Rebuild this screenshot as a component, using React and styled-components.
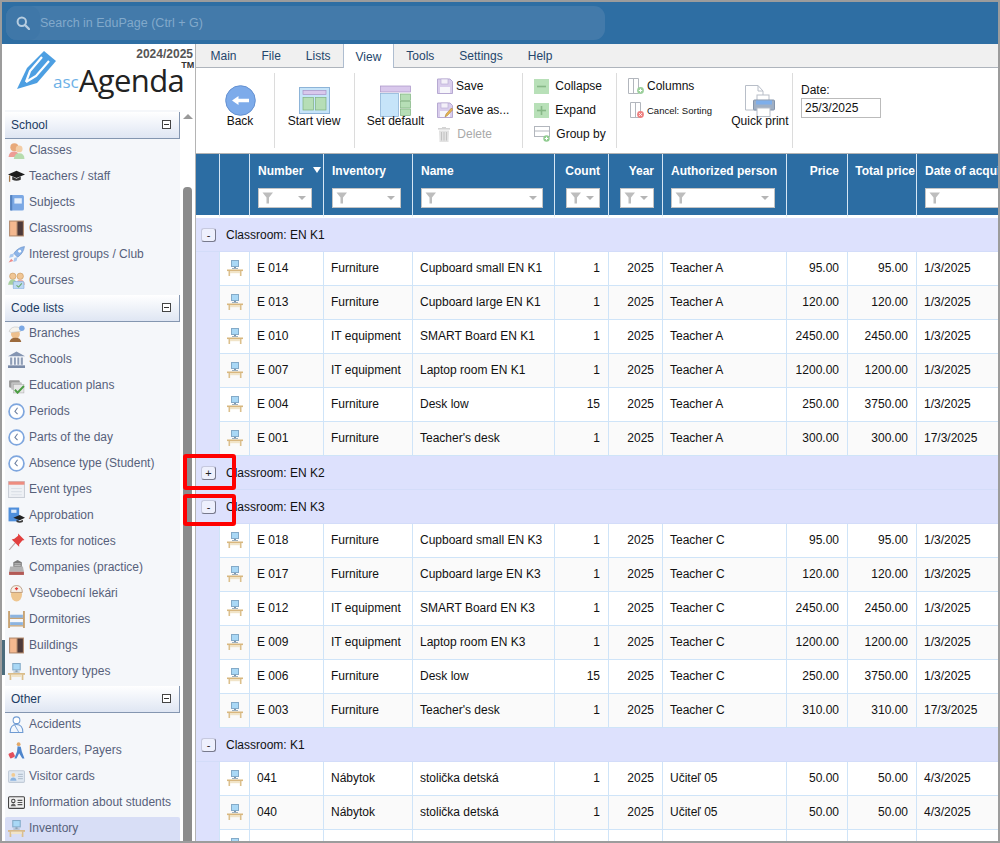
import React from 'react';
import styled, { createGlobalStyle } from 'styled-components';

const GlobalStyle = createGlobalStyle`
	html, body {
		margin: 0;
		padding: 0;
		background: #fff;
	}
	body {
		font-family: "Liberation Sans", Arial, sans-serif;
		font-size: 12px;
		color: #111;
	}
	* {
		box-sizing: border-box;
	}
`;

const Page = styled.div`
	position: relative;
	width: 1000px;
	height: 843px;
	border: 2px solid #9c9c9c;
	display: flex;
	flex-direction: column;
	overflow: hidden;
	background: #fff;
`;

const TopBar = styled.header`
	flex: none;
	height: 42px;
	padding: 4px;
	background: #2e6ea3;
`;

const SearchBox = styled.div`
	width: 599px;
	height: 34px;
	border-radius: 11px;
	background: #437aaa;
	display: flex;
	align-items: center;
	color: #82a9ca;
	font-size: 12.5px;
`;

const SearchButton = styled.div`
	width: 34px;
	height: 34px;
	border-radius: 11px;
	background: #3f77a8;
	display: flex;
	align-items: center;
	justify-content: center;
`;

const Body = styled.div`
	flex: 1;
	min-height: 0;
	display: flex;
`;

/* sidebar */

const Sidebar = styled.aside`
	flex: none;
	width: 193px;
	padding-left: 3px;
	display: flex;
	flex-direction: column;
	background: #fff;
`;

const LogoArea = styled.div`
	flex: none;
	height: 66px;
	padding-right: 2px;
	display: flex;
	flex-direction: column;
`;

const SchoolYear = styled.div`
	align-self: flex-end;
	font-weight: bold;
	color: #555;
	line-height: 14px;
	margin-top: 3px;
`;

const LogoRow = styled.div`
	display: flex;
	align-items: flex-start;
	margin-top: -10px;
	padding-left: 12px;
`;

const LogoAsc = styled.span`
	font-family: "Open Sans", sans-serif;
	font-size: 17px;
	line-height: 20px;
	color: #6db1e6;
	margin: 21px 0 0 -4px;
`;

const LogoName = styled.span`
	font-family: "Open Sans", sans-serif;
	font-size: 31px;
	line-height: 42px;
	color: #222;
	letter-spacing: -0.6px;
	margin-top: 8px;
`;

const LogoMark = styled.span`
	font-size: 9px;
	font-weight: bold;
	color: #333;
	line-height: 10px;
	margin: 9px 0 0 -3px;
`;

const SideScroll = styled.div`
	flex: 1;
	min-height: 0;
	display: flex;
	overflow: hidden;
`;

const MenuColumn = styled.nav`
	flex: none;
	width: 175px;
	padding-top: 2px;
	background: #f5f7fa;
`;

const SectionHead = styled.div`
	height: 27px;
	padding: 0 8px 1px 6px;
	display: flex;
	align-items: center;
	justify-content: space-between;
	color: #1b3b63;
	background: linear-gradient(#fff, #dfe6f3);
	border-right: 1px solid #8496b0;
	border-bottom: 1px solid #8496b0;
`;

const CollapseBox = styled.span`
	width: 9px;
	height: 9px;
	border: 1px solid #444;
	background: #fff;
	display: flex;
	align-items: center;
	justify-content: center;

	&::before {
		content: '';
		width: 5px;
		height: 1px;
		background: #333;
	}
`;

const MenuItem = styled.div`
	height: 26px;
	padding: 0 0 4px 3px;
	display: flex;
	align-items: center;
	gap: 4px;
	color: #57617a;
	border-radius: 2px;
	background: ${(p) => (p.$active ? '#d8def6' : 'transparent')};
`;

const ScrollTrack = styled.div`
	flex: none;
	width: 15px;
	padding: 4px 3px 0 3px;
	display: flex;
	flex-direction: column;
	align-items: center;
`;

const ScrollArrow = styled.div`
	width: 0;
	height: 0;
	border-left: 5px solid transparent;
	border-right: 5px solid transparent;
	border-bottom: 5px solid #9a9a9a;
`;

const ScrollThumb = styled.div`
	width: 9px;
	height: 700px;
	margin-top: 68px;
	border-radius: 4px 4px 0 0;
	background: #8c8c8c;
`;

const EdgeMark = styled.div`
	position: absolute;
	left: 0;
	top: 638px;
	width: 3px;
	height: 35px;
	background: #4b6c7c;
`;

/* main area */

const Main = styled.main`
	flex: 1;
	min-width: 0;
	display: flex;
	flex-direction: column;
	border-left: 1px solid #b4b4b4;
`;

const TabBar = styled.div`
	flex: none;
	height: 24px;
	padding-left: 2px;
	display: flex;
	background: #f0f0f0;
	border-bottom: 1px solid #aeb4bc;
`;

const Tab = styled.div`
	height: ${(p) => (p.$active ? '24px' : '23px')};
	padding: 1px 11.5px 0;
	display: flex;
	align-items: center;
	color: #24466c;
	background: ${(p) => (p.$active ? '#fff' : 'transparent')};
	border-left: 1px solid ${(p) => (p.$active ? '#aebdd0' : 'transparent')};
	border-right: 1px solid ${(p) => (p.$active ? '#aebdd0' : 'transparent')};
`;

const Ribbon = styled.div`
	flex: none;
	height: 86px;
	padding-top: 5px;
	display: flex;
	background: #fff;
	border-bottom: 1px solid #b4b4b4;
`;

const RibbonGroup = styled.div`
	flex: none;
	width: ${(p) => p.$width}px;
	height: 75px;
	padding-left: ${(p) => p.$pad || 0}px;
	display: flex;
	border-right: ${(p) => (p.$last ? '0' : '1px solid #dcdcdc')};
`;

const BigButton = styled.div`
	flex: none;
	width: ${(p) => p.$width}px;
	height: 75px;
	padding-bottom: 20px;
	position: relative;
	display: flex;
	align-items: center;
	justify-content: center;
`;

const BigLabel = styled.span`
	position: absolute;
	left: -10px;
	right: -10px;
	top: 41px;
	text-align: center;
	white-space: nowrap;
`;

const SmallColumn = styled.div`
	flex: none;
	display: flex;
	flex-direction: column;
	padding-top: 3px;
	gap: 4px;
	margin-left: ${(p) => p.$offset || 0}px;
`;

const SmallButton = styled.div`
	height: 20px;
	display: flex;
	align-items: center;
	gap: 3px;
	white-space: nowrap;
	color: ${(p) => (p.$disabled ? '#a9a9a9' : '#111')};
	font-size: ${(p) => p.$size || 12}px;
`;

const DateBlock = styled.div`
	padding-top: 10px;
	display: flex;
	flex-direction: column;
	gap: 1px;
`;

const DateInput = styled.div`
	width: 80px;
	height: 20px;
	padding-left: 3px;
	display: flex;
	align-items: center;
	border: 1px solid #bbb;
`;

/* table */

const TableWrap = styled.div`
	flex: 1;
	min-height: 0;
	overflow: hidden;
	background: #fff;
`;

const Table = styled.table`
	table-layout: fixed;
	width: 841px;
	border-collapse: separate;
	border-spacing: 0;
`;

const HeadCell = styled.th`
	height: 64px;
	padding: 10px ${(p) => (p.$tight ? 1 : 8)}px 0 8px;
	vertical-align: top;
	background: #2c6da3;
	color: #fff;
	font-size: 12px;
	font-weight: bold;
	line-height: 14px;
	white-space: nowrap;
	text-align: ${(p) => (p.$right ? 'right' : 'left')};
	border-right: 1px solid #d5e6f5;
	border-bottom: 3px solid #fff;
`;

const HeadLabel = styled.div`
	display: flex;
	justify-content: space-between;
	margin-right: ${(p) => (p.$sorted ? '-6px' : '0')};
`;

const SortArrow = styled.span`
	width: 0;
	height: 0;
	margin-top: 3px;
	border-left: 4px solid transparent;
	border-right: 4px solid transparent;
	border-top: 6px solid #fff;
`;

const FilterBox = styled.div`
	width: ${(p) => p.$width}px;
	height: 20px;
	margin-top: 10px;
	margin-left: ${(p) => (p.$right ? 'auto' : '0')};
	padding: 0 5px 0 3px;
	display: flex;
	align-items: center;
	justify-content: space-between;
	background: #fff;
	border: 1px solid #c4c4c4;
`;

const FilterCaret = styled.span`
	width: 0;
	height: 0;
	border-left: 4px solid transparent;
	border-right: 4px solid transparent;
	border-top: 4px solid #b5b5b5;
`;

const GroupCell = styled.td`
	height: 34px;
	padding: 0 0 0 5px;
	background: #dde1fd;
	border-bottom: 1px solid #d3dcf9;
	color: #111;
`;

const GroupLine = styled.div`
	display: flex;
	align-items: center;
	gap: 10px;
`;

const Toggle = styled.span`
	flex: none;
	width: 15px;
	height: 14px;
	display: flex;
	align-items: center;
	justify-content: center;
	background: #eef0fd;
	border: 1px solid #c6c9de;
	border-right-color: #77798c;
	border-bottom-color: #77798c;
	border-radius: 3px;
	font-size: 11px;
	line-height: 12px;
	color: #222;
`;

const MarginCell = styled.td`
	background: #dde1fd;
	border-right: 1px solid #cfe4f8;
`;

const Cell = styled.td`
	height: 34px;
	padding: 0 8px 1px 7px;
	white-space: nowrap;
	overflow: hidden;
	background: ${(p) => (p.$even ? '#fafafa' : '#fff')};
	border-right: 1px solid #cfe4f8;
	border-bottom: 1px solid #cfe4f8;
	text-align: ${(p) => (p.$right ? 'right' : p.$center ? 'center' : 'left')};
`;

const Glyph = styled.svg`
	flex: none;
	display: block;
`;

const Highlight = styled.div`
	position: absolute;
	left: 181px;
	top: ${(p) => p.$top}px;
	width: 53px;
	height: ${(p) => p.$height}px;
	border: 4px solid #f00;
	border-radius: 3px;
`;

/* drawings */

const DeskArt = () => (
	<>
		<rect x="4.5" y="0.5" width="7" height="6" fill="#a9d8f6" stroke="#84aac8" />
		<rect x="7" y="7" width="2" height="1.5" fill="#7d96ab" />
		<rect x="5" y="8" width="6" height="1" fill="#9db0c0" />
		<rect x="0" y="9.5" width="16" height="1.6" fill="#d8b77f" />
		<rect x="1.5" y="11" width="1.6" height="5" fill="#dcc08d" />
		<rect x="12.9" y="11" width="1.6" height="5" fill="#dcc08d" />
		<rect x="3" y="11" width="10" height="2.2" fill="#f1e4c8" />
	</>
);

const Desk = ({ size = 16 }) => (
	<Glyph width={size} height={size} viewBox="0 0 16 16">
		<DeskArt />
	</Glyph>
);

const clock = (
	<>
		<circle cx="8" cy="8" r="7" fill="#fff" stroke="#7ea6de" strokeWidth="1.6" />
		<path d="M9 4.5 L6.5 8 L9 10.5" fill="none" stroke="#6c7fa0" strokeWidth="1" />
	</>
);

const door = (
	<>
		<rect x="1" y="0.5" width="14" height="15" fill="#b28a6d" />
		<rect x="2" y="1.5" width="6" height="13" fill="#f4b88f" />
		<rect x="9" y="1.5" width="5" height="13" fill="#4d3a3a" />
	</>
);

const menuArt = {
	classes: (
		<>
			<circle cx="6" cy="5" r="3.8" fill="#e8a97a" />
			<path d="M0.5 14 Q1 9 6 9 Q10 9 10 14 Z" fill="#ee9d96" />
			<circle cx="10.5" cy="6.5" r="3.2" fill="#f3cda6" />
			<path d="M5.5 16 Q6 10.5 10.5 10.5 Q15.5 10.5 15.5 16 Z" fill="#b6dcae" />
		</>
	),
	teachers: (
		<>
			<path d="M0 6 L8 2.5 L16 6 L8 9.5 Z" fill="#1d1d1d" />
			<path d="M4 8 L4 11 Q8 13 12 11 L12 8 L8 10 Z" fill="#333" />
			<path d="M1.5 7 L1.5 13" stroke="#a5794a" strokeWidth="1.2" />
		</>
	),
	subjects: (
		<>
			<rect x="2" y="1" width="13" height="14.5" rx="1.5" fill="#7ba8e4" />
			<rect x="2" y="1" width="2" height="14.5" fill="#5582c0" />
			<rect x="6" y="4" width="7" height="5" fill="#e6f0fc" />
		</>
	),
	classrooms: door,
	interest: (
		<>
			<path d="M15.5 0.5 Q9 1.5 5.5 7 L9 10.5 Q14.5 7 15.5 0.5 Z" fill="#8cb4e8" stroke="#6d93c8" strokeWidth="0.6" />
			<circle cx="11" cy="5" r="1.4" fill="#fff" />
			<path d="M5.5 7 L2 8 L1 11 L5 10 Z M9 10.5 L8 14 L5 15 L6 11 Z" fill="#a9c8ef" />
			<path d="M3 12 L0.5 15.5 L5 14 Z" fill="#ee8b88" />
		</>
	),
	courses: (
		<>
			<circle cx="4.5" cy="4" r="3" fill="#f0c695" stroke="#c99a62" strokeWidth="0.6" />
			<circle cx="11.5" cy="4" r="3" fill="#f0c695" stroke="#c99a62" strokeWidth="0.6" />
			<path d="M0 12 Q1 7 4.5 7 Q8 7 8 12 Z" fill="#a8cf9f" />
			<path d="M8 12 Q8 7 11.5 7 Q15 7 16 12 Z" fill="#ecb0a4" />
			<rect x="5" y="9" width="10" height="7" rx="1" fill="#bcd8f2" stroke="#7ea6de" strokeWidth="0.6" />
			<path d="M8 12.5 L10 14.2 L13 10.8" fill="none" stroke="#6aa96a" />
		</>
	),
	branches: (
		<>
			<circle cx="7" cy="8.5" r="4.2" fill="#eec08d" />
			<path d="M1 6 Q3 1 9 2 Q13 3 12 6 L3 7 Z" fill="#f6f4ee" stroke="#bbb" strokeWidth="0.5" />
			<circle cx="13" cy="3" r="2.6" fill="#7ba8e4" />
			<path d="M1.5 16 Q2 12 7 12 Q12 12 12.5 16 Z" fill="#9b6a3c" />
		</>
	),
	schools: (
		<>
			<path d="M8 0.5 L16 5 L0 5 Z" fill="#8495b2" />
			<path d="M2 6 h2 v7 h-2 Z M5.6 6 h1.8 v7 h-1.8 Z M8.8 6 h1.8 v7 h-1.8 Z M12 6 h2 v7 h-2 Z" fill="#8e9db6" />
			<rect x="0" y="13.5" width="16" height="2.5" fill="#7a8ba8" />
		</>
	),
	plans: (
		<>
			<rect x="1" y="3" width="10" height="7" rx="1" fill="#9a9a9a" />
			<rect x="3" y="5" width="10" height="7" rx="1" fill="#c2c2c2" />
			<rect x="5" y="7" width="10" height="8" fill="#e7e7e7" stroke="#aaa" strokeWidth="0.5" />
			<path d="M6.5 12 L9 14.8 L15 8.5" fill="none" stroke="#4b9d43" strokeWidth="1.8" />
		</>
	),
	clock,
	event: (
		<>
			<rect x="0.5" y="0.5" width="15" height="15" fill="#eef1f5" stroke="#c9ced6" />
			<rect x="0.5" y="0.5" width="15" height="3" fill="#ee8d80" />
			<path d="M3 7 h10 M3 10 h10 M3 13 h10" stroke="#dbe0e7" strokeWidth="1" />
		</>
	),
	approbation: (
		<>
			<rect x="0.5" y="0.5" width="10" height="13" fill="#4f8fdc" />
			<rect x="3" y="2.5" width="5" height="3" fill="#dbe9fa" />
			<path d="M5 10 L11 7.5 L16 10 L11 12.5 Z" fill="#222" />
			<path d="M8 12 L8 14 Q11 15.5 14 14 L14 12 L11 13.5 Z" fill="#3a3a3a" />
		</>
	),
	pin: (
		<>
			<path d="M1 16 L7 9" stroke="#b9a9a9" strokeWidth="1" />
			<path d="M9.5 0.5 L15.5 6.5 L13.5 7 L10.5 10.5 L10.5 13 L3.5 6 L6 5.5 L9.5 2.5 Z" fill="#e2403f" />
		</>
	),
	companies: (
		<>
			<path d="M5 3 L9 1 L13 3 L13 10 L5 10 Z" fill="#7c7c7c" />
			<path d="M2 7 L14 7 L15 12 L1 12 Z" fill="#b3b3b3" />
			<path d="M1 12 h14 v3 h-14 Z" fill="#b35a56" />
			<path d="M6 4.5 h6 M6 6 h6" stroke="#dadada" strokeWidth="0.7" />
		</>
	),
	doctor: (
		<>
			<ellipse cx="8" cy="9" rx="5.2" ry="6.5" fill="#eec690" />
			<path d="M2.5 7 Q2.5 0.5 8 0.5 Q13.5 0.5 13.5 7 Z" fill="#f6f0e8" stroke="#a67a55" strokeWidth="0.6" />
			<path d="M8 2 v3 M6.5 3.5 h3" stroke="#e2403f" strokeWidth="1.2" />
		</>
	),
	dorm: (
		<>
			<path d="M1 0 v16 M15 0 v16" stroke="#c8a373" strokeWidth="1.8" />
			<rect x="2" y="3.5" width="12" height="3" fill="#8cb4e0" />
			<rect x="2" y="10.5" width="12" height="3" fill="#8cb4e0" />
			<path d="M1 7 h14 M1 14 h14" stroke="#c8a373" strokeWidth="1.2" />
		</>
	),
	buildings: door,
	desk: <DeskArt />,
	accidents: (
		<>
			<circle cx="8" cy="4" r="3.2" fill="#fff" stroke="#6f9bd2" />
			<path d="M2 15.5 Q2 8 8 8 Q14 8 14 15.5 Z" fill="#f2f7fd" stroke="#6f9bd2" />
			<path d="M6 8 L10 15" stroke="#6f9bd2" strokeWidth="0.8" />
		</>
	),
	boarders: (
		<>
			<circle cx="10" cy="2" r="1.8" fill="#e2a868" />
			<path d="M9 4 L12 4.5 L13 9 L15.5 15.5 L13.5 15.5 L10.5 10.5 L8 15.5 L6 15.5 L8.5 9 Z" fill="#4f86cc" />
			<rect x="1" y="10" width="5" height="5" rx="1" transform="rotate(-25 3.5 12.5)" fill="#e4505c" />
		</>
	),
	visitor: (
		<>
			<rect x="0.5" y="2.5" width="15" height="11" rx="1" fill="#dfe8f2" stroke="#c2ccd8" />
			<circle cx="5" cy="6.5" r="1.8" fill="#f2cb92" />
			<path d="M2 12 Q2.5 9 5 9 Q7.5 9 8 12 Z" fill="#8cb4e0" />
			<path d="M9.5 6 h4.5 M9.5 8 h4.5 M9.5 10 h4.5" stroke="#b5c2d0" />
		</>
	),
	info: (
		<>
			<rect x="0.5" y="2.5" width="15" height="11" rx="1" fill="#f1f1f1" stroke="#444" />
			<circle cx="5" cy="6.5" r="1.6" fill="none" stroke="#444" />
			<path d="M2.5 11.5 Q3 9 5 9 Q7 9 7.5 11.5 Z" fill="#666" />
			<path d="M9 6 h4.5 M9 8 h4.5 M9 10 h4.5" stroke="#555" />
		</>
	),
};

const MenuIcon = ({ kind }) => (
	<Glyph width="17" height="17" viewBox="0 0 16 16">
		{menuArt[kind]}
	</Glyph>
);

const LogoPencil = () => (
	<Glyph width="40" height="40" viewBox="0 0 40 40">
		<polygon points="27,0 39,10 20,32 0,38 10,17" fill="#4d9fe2" />
		<path d="M25 6 L13 20 L9 31" fill="none" stroke="#fff" strokeWidth="2.2" />
		<path d="M32 10 L19 25 L9 31" fill="none" stroke="#fff" strokeWidth="2.2" />
	</Glyph>
);

const SearchIcon = () => (
	<Glyph width="14" height="14" viewBox="0 0 14 14">
		<circle cx="5.8" cy="5.8" r="4.2" fill="none" stroke="#b7cde0" strokeWidth="2" />
		<path d="M9 9 L13 13" stroke="#b7cde0" strokeWidth="2.4" strokeLinecap="round" />
	</Glyph>
);

const BackIcon = () => (
	<Glyph width="31" height="31" viewBox="0 0 31 31">
		<circle cx="15.5" cy="15.5" r="14.8" fill="#7dabea" stroke="#6490d0" />
		<path d="M7 15.5 L13.5 11 L13.5 13.8 L24 13.8 L24 17.2 L13.5 17.2 L13.5 20 Z" fill="#fff" />
	</Glyph>
);

const StartViewIcon = () => (
	<Glyph width="31" height="27" viewBox="0 0 31 27">
		<rect x="0.5" y="0.5" width="30" height="26" fill="#c6e4f9" stroke="#8db4d8" />
		<rect x="4" y="3.5" width="23" height="4" fill="#d9c8ec" stroke="#a792c6" strokeWidth="0.7" />
		<rect x="4" y="10.5" width="10.5" height="12.5" fill="#b6deb6" stroke="#7fb27f" strokeWidth="0.7" />
		<rect x="16.5" y="10.5" width="10.5" height="12.5" fill="#b6deb6" stroke="#7fb27f" strokeWidth="0.7" />
	</Glyph>
);

const SetDefaultIcon = () => (
	<Glyph width="31" height="32" viewBox="0 0 31 32">
		<rect x="0.5" y="1" width="30" height="6" fill="#d9c8ec" stroke="#a792c6" strokeWidth="0.7" />
		<rect x="0.5" y="8.5" width="18" height="23" fill="#c6e4f9" stroke="#8db4d8" strokeWidth="0.8" />
		<rect x="20.5" y="9" width="10" height="6.5" fill="#b6deb6" stroke="#7fb27f" strokeWidth="0.7" />
		<rect x="20.5" y="16.5" width="10" height="6.5" fill="#b6deb6" stroke="#7fb27f" strokeWidth="0.7" />
		<rect x="20.5" y="24" width="10" height="6.5" fill="#b6deb6" stroke="#7fb27f" strokeWidth="0.7" />
	</Glyph>
);

const Floppy = ({ edit }) => (
	<Glyph width="16" height="16" viewBox="0 0 16 16">
		<path d="M0.5 1 H13 L15.5 3.5 V15.5 H0.5 Z" fill="#d9cdec" stroke="#b6a9d2" />
		<rect x="4" y="1" width="7" height="5" fill="#f3f0f8" stroke="#b6a9d2" strokeWidth="0.6" />
		<rect x="3" y="9" width="10" height="6" fill="#f7f7fb" />
		{edit && <path d="M8 15 L9 12 L14.5 6 L16 7.5 L10.5 13.5 Z" fill="#e9b44f" stroke="#9a7a38" strokeWidth="0.5" />}
	</Glyph>
);

const TrashIcon = () => (
	<Glyph width="14" height="15" viewBox="0 0 14 15">
		<rect x="1" y="1" width="12" height="1.6" fill="#d4d4d4" />
		<rect x="5" y="0" width="4" height="1.5" fill="#d4d4d4" />
		<path d="M2 3.5 H12 L11.5 15 H2.5 Z" fill="#e2e2e2" />
		<path d="M4.5 5 V13.5 M7 5 V13.5 M9.5 5 V13.5" stroke="#c2c2c2" />
	</Glyph>
);

const FoldIcon = ({ plus }) => (
	<Glyph width="15" height="15" viewBox="0 0 15 15">
		<rect width="15" height="15" fill="#b8e0b8" />
		<path d="M3 7.5 H12" stroke="#88b888" strokeWidth="1.6" />
		{plus && <path d="M7.5 3 V12" stroke="#88b888" strokeWidth="1.6" />}
	</Glyph>
);

const GroupIcon = () => (
	<Glyph width="16" height="16" viewBox="0 0 16 16">
		<rect x="0.5" y="0.5" width="15" height="10" fill="#fff" stroke="#b2b6bd" />
		<path d="M0.5 5 H15.5" stroke="#b2b6bd" />
		<circle cx="12.5" cy="12.5" r="3.2" fill="#8fcb8f" />
		<path d="M10.8 12.5 H14.2 M12.5 10.8 V14.2" stroke="#fff" />
	</Glyph>
);

const ColumnsIcon = ({ cancel }) => (
	<Glyph width="16" height="16" viewBox="0 0 16 16">
		{cancel ? (
			<path d="M2.5 0.5 H12.5 V15.5 H2.5 Z M7.5 0.5 V15.5" fill="#fff" stroke="#b2b6bd" />
		) : (
			<path d="M0.5 0.5 H10.5 V15.5 H0.5 Z M5.5 0.5 V15.5" fill="#fff" stroke="#b2b6bd" />
		)}
		<circle cx="12.5" cy="12.5" r="3.4" fill={cancel ? '#ee8080' : '#9bcf9b'} />
		{cancel ? (
			<path d="M11.2 11.2 L13.8 13.8 M13.8 11.2 L11.2 13.8" stroke="#fff" />
		) : (
			<path d="M10.8 12.5 H14.2 M12.5 10.8 V14.2" stroke="#fff" />
		)}
	</Glyph>
);

const PrintIcon = () => (
	<Glyph width="30" height="32" viewBox="0 0 30 32">
		<path d="M0.5 0.5 H13 L18 6 V25 H0.5 Z" fill="#fff" stroke="#b8bec8" />
		<path d="M13 0.5 V6 H18" fill="none" stroke="#b8bec8" />
		<rect x="12" y="10" width="12" height="6" fill="#fff" stroke="#b8bec8" />
		<rect x="8.5" y="15" width="21" height="10" rx="1" fill="#9fafc4" stroke="#8494aa" />
		<rect x="11" y="15.5" width="16" height="4" fill="#7eaeea" />
		<rect x="12" y="23" width="13" height="8.5" fill="#fff" stroke="#b8bec8" />
	</Glyph>
);

const FunnelIcon = () => (
	<Glyph width="12" height="12" viewBox="0 0 12 12">
		<path d="M0.5 0.5 H11 L7 5.5 V11.5 H4.5 V5.5 Z" fill="#bdbdbd" />
	</Glyph>
);

/* data */

const menu = [
	{
		title: 'School',
		items: [
			['classes', 'Classes'],
			['teachers', 'Teachers / staff'],
			['subjects', 'Subjects'],
			['classrooms', 'Classrooms'],
			['interest', 'Interest groups / Club'],
			['courses', 'Courses']
		]
	},
	{
		title: 'Code lists',
		items: [
			['branches', 'Branches'],
			['schools', 'Schools'],
			['plans', 'Education plans'],
			['clock', 'Periods'],
			['clock', 'Parts of the day'],
			['clock', 'Absence type (Student)'],
			['event', 'Event types'],
			['approbation', 'Approbation'],
			['pin', 'Texts for notices'],
			['companies', 'Companies (practice)'],
			['doctor', 'Všeobecní lekári'],
			['dorm', 'Dormitories'],
			['buildings', 'Buildings'],
			['desk', 'Inventory types']
		]
	},
	{
		title: 'Other',
		items: [
			['accidents', 'Accidents'],
			['boarders', 'Boarders, Payers'],
			['visitor', 'Visitor cards'],
			['info', 'Information about students'],
			['desk', 'Inventory', true]
		]
	}
];

const tabs = ['Main', 'File', 'Lists', 'View', 'Tools', 'Settings', 'Help'];

const columns = [
	{ width: 24 },
	{ width: 30 },
	{ width: 74, label: 'Number', filter: 54, sorted: true },
	{ width: 89, label: 'Inventory', filter: 69 },
	{ width: 142, label: 'Name', filter: 122 },
	{ width: 54, label: 'Count', filter: 34, right: true },
	{ width: 54, label: 'Year', filter: 34, right: true },
	{ width: 124, label: 'Authorized person', filter: 104 },
	{ width: 61, label: 'Price', right: true },
	{ width: 69, label: 'Total price', right: true, tight: true },
	{ width: 120, label: 'Date of acquisition', filter: 104 }
];

const enRows = (room, person, lastPrice, ids) => [
	[ids[0], 'Furniture', `Cupboard small ${room}`, 1, 2025, person, '95.00', '95.00', '1/3/2025'],
	[ids[1], 'Furniture', `Cupboard large ${room}`, 1, 2025, person, '120.00', '120.00', '1/3/2025'],
	[ids[2], 'IT equipment', `SMART Board ${room}`, 1, 2025, person, '2450.00', '2450.00', '1/3/2025'],
	[ids[3], 'IT equipment', `Laptop room ${room}`, 1, 2025, person, '1200.00', '1200.00', '1/3/2025'],
	[ids[4], 'Furniture', 'Desk low', 15, 2025, person, '250.00', '3750.00', '1/3/2025'],
	[ids[5], 'Furniture', "Teacher's desk", 1, 2025, person, lastPrice, lastPrice, '17/3/2025']
];

const k1Row = (id) => [id, 'Nábytok', 'stolička detská', 1, 2025, 'Učiteľ 05', '50.00', '50.00', '4/3/2025'];

const groups = [
	{
		name: 'Classroom: EN K1',
		rows: enRows('EN K1', 'Teacher A', '300.00', ['E 014', 'E 013', 'E 010', 'E 007', 'E 004', 'E 001'])
	},
	{ name: 'Classroom: EN K2', closed: true, rows: [] },
	{
		name: 'Classroom: EN K3',
		rows: enRows('EN K3', 'Teacher C', '310.00', ['E 018', 'E 017', 'E 012', 'E 009', 'E 006', 'E 003'])
	},
	{ name: 'Classroom: K1', rows: [k1Row('041'), k1Row('040'), k1Row('039')] }
];

const rightCols = [false, false, false, true, true, false, true, true, false];

const InventoryTable = () => (
	<Table>
		<colgroup>
			{columns.map((c, i) => (
				<col key={i} width={c.width} />
			))}
		</colgroup>
		<thead>
			<tr>
				{columns.map((c, i) => (
					<HeadCell key={i} $right={c.right} $tight={c.tight}>
						{c.label && (
							<HeadLabel $sorted={c.sorted} style={c.right ? { justifyContent: 'flex-end' } : undefined}>
								{c.label}
								{c.sorted && <SortArrow />}
							</HeadLabel>
						)}
						{c.filter && (
							<FilterBox $width={c.filter} $right={c.right}>
								<FunnelIcon />
								<FilterCaret />
							</FilterBox>
						)}
					</HeadCell>
				))}
			</tr>
		</thead>
		<tbody>
			{groups.map((g) => (
				<React.Fragment key={g.name}>
					<tr>
						<GroupCell colSpan={columns.length}>
							<GroupLine>
								<Toggle>{g.closed ? '+' : '-'}</Toggle>
								{g.name}
							</GroupLine>
						</GroupCell>
					</tr>
					{g.rows.map((row, r) => (
						<tr key={r}>
							<MarginCell />
							<Cell $even={r % 2 === 1}>
								<Desk />
							</Cell>
							{row.map((value, i) => (
								<Cell key={i} $even={r % 2 === 1} $right={rightCols[i]}>
									{value}
								</Cell>
							))}
						</tr>
					))}
				</React.Fragment>
			))}
		</tbody>
	</Table>
);

export default function App() {
	return (
		<>
			<GlobalStyle />
			<Page>
				<TopBar>
					<SearchBox>
						<SearchButton>
							<SearchIcon />
						</SearchButton>
						Search in EduPage (Ctrl + G)
					</SearchBox>
				</TopBar>
				<Body>
					<Sidebar>
						<LogoArea>
							<SchoolYear>2024/2025</SchoolYear>
							<LogoRow>
								<LogoPencil />
								<LogoAsc>asc</LogoAsc>
								<LogoName>Agenda</LogoName>
								<LogoMark>TM</LogoMark>
							</LogoRow>
						</LogoArea>
						<SideScroll>
							<MenuColumn>
								{menu.map((section) => (
									<div key={section.title}>
										<SectionHead>
											{section.title}
											<CollapseBox />
										</SectionHead>
										{section.items.map(([kind, label, active]) => (
											<MenuItem key={label} $active={active}>
												<MenuIcon kind={kind} />
												{label}
											</MenuItem>
										))}
									</div>
								))}
							</MenuColumn>
							<ScrollTrack>
								<ScrollArrow />
								<ScrollThumb />
							</ScrollTrack>
						</SideScroll>
					</Sidebar>
					<Main>
						<TabBar>
							{tabs.map((t) => (
								<Tab key={t} $active={t === 'View'}>
									{t}
								</Tab>
							))}
						</TabBar>
						<Ribbon>
							<RibbonGroup $width={79} $pad={16}>
								<BigButton $width={56}>
									<BackIcon />
									<BigLabel>Back</BigLabel>
								</BigButton>
							</RibbonGroup>
							<RibbonGroup $width={80} $pad={11}>
								<BigButton $width={56}>
									<StartViewIcon />
									<BigLabel>Start view</BigLabel>
								</BigButton>
							</RibbonGroup>
							<RibbonGroup $width={168} $pad={0}>
								<BigButton $width={81}>
									<SetDefaultIcon />
									<BigLabel>Set default</BigLabel>
								</BigButton>
								<SmallColumn $offset={1}>
									<SmallButton>
										<Floppy />
										Save
									</SmallButton>
									<SmallButton>
										<Floppy edit />
										Save as...
									</SmallButton>
									<SmallButton $disabled>
										<TrashIcon />
										&nbsp;Delete
									</SmallButton>
								</SmallColumn>
							</RibbonGroup>
							<RibbonGroup $width={94} $pad={11}>
								<SmallColumn>
									<SmallButton>
										<FoldIcon />
										&nbsp;Collapse
									</SmallButton>
									<SmallButton>
										<FoldIcon plus />
										&nbsp;Expand
									</SmallButton>
									<SmallButton>
										<GroupIcon />
										&nbsp;Group by
									</SmallButton>
								</SmallColumn>
							</RibbonGroup>
							<RibbonGroup $width={176} $pad={11}>
								<SmallColumn>
									<SmallButton>
										<ColumnsIcon />
										Columns
									</SmallButton>
									<SmallButton $size={9.5}>
										<ColumnsIcon cancel />
										Cancel: Sorting
									</SmallButton>
								</SmallColumn>
								<BigButton $width={60} style={{ marginLeft: '18px' }}>
									<PrintIcon />
									<BigLabel>Quick print</BigLabel>
								</BigButton>
							</RibbonGroup>
							<RibbonGroup $width={200} $pad={8} $last>
								<DateBlock>
									Date:
									<DateInput>25/3/2025</DateInput>
								</DateBlock>
							</RibbonGroup>
						</Ribbon>
						<TableWrap>
							<InventoryTable />
						</TableWrap>
					</Main>
				</Body>
				<EdgeMark />
				<Highlight $top={452} $height={36} />
				<Highlight $top={492} $height={32} />
			</Page>
		</>
	);
}
